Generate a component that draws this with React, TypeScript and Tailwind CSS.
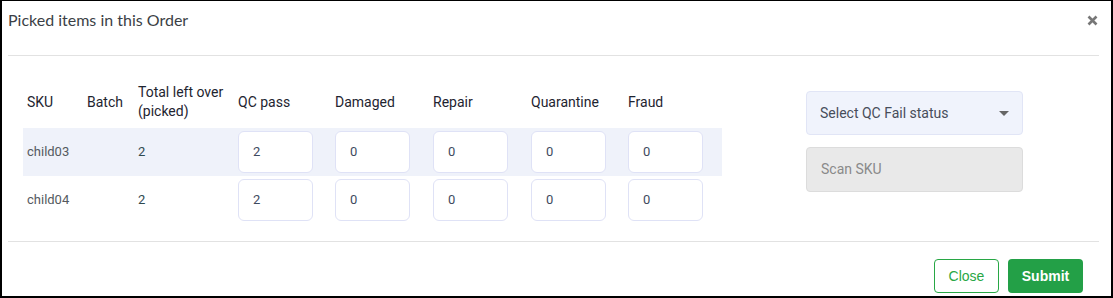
import React from 'react'

const cols = [
  { key: 'sku', label: 'SKU', w: 'w-[60px]' },
  { key: 'batch', label: 'Batch', w: 'w-[51px]' },
  { key: 'left', label: 'Total left over (picked)', w: 'w-[100px]' },
  { key: 'qc', label: 'QC pass', w: 'w-[97px]' },
  { key: 'damaged', label: 'Damaged', w: 'w-[98px]' },
  { key: 'repair', label: 'Repair', w: 'w-[98px]' },
  { key: 'quarantine', label: 'Quarantine', w: 'w-[97px]' },
  { key: 'fraud', label: 'Fraud', w: 'w-[94px]' },
]

const rows = [
  { sku: 'child03', left: 2, values: [2, 0, 0, 0, 0] },
  { sku: 'child04', left: 2, values: [2, 0, 0, 0, 0] },
]

function QtyInput({ value }: { value: number }) {
  return (
    <div className="w-[75px] h-[42px] bg-white border border-[#dfe2f6] rounded-[6px] flex items-center pl-[14px] text-[13px] text-[#3e4a5e]">
      {value}
    </div>
  )
}

export default function App() {
  return (
    <div className="w-[1113px] h-[298px] box-border border-black border-l-2 border-t border-r-2 border-b-2 bg-white flex flex-col font-['Roboto',sans-serif]">
      {/* header */}
      <div className="h-[55px] ml-[6px] mr-[12px] border-b border-[#e2e2e2] flex items-start justify-between">
        <h2 className="pt-[9px] text-[16px] leading-[20px] font-normal text-[#3b3f46] font-['Lato',sans-serif]">
          Picked items in this Order
        </h2>
        <button className="mt-[14px] mr-[1px] p-0">
          <svg width="11" height="11" viewBox="0 0 11 11">
            <path d="M1.5 1.5 L9.5 9.5 M9.5 1.5 L1.5 9.5" stroke="#777" strokeWidth="2.6" strokeLinecap="butt" />
          </svg>
        </button>
      </div>

      {/* body */}
      <div className="flex h-[185px] ml-[21px] mr-[12px]">
        <div className="pt-[24px] w-[699px]">
          <div className="flex h-[48px] items-center pl-[4px] pb-[4px]">
            {cols.map((c) => (
              <div key={c.key} className={`${c.w} text-[14px] leading-[19px] font-normal text-[#1e2430]`}>
                {c.key === 'left' ? (
                  <>
                    Total left over
                    <br />
                    (picked)
                  </>
                ) : (
                  c.label
                )}
              </div>
            ))}
          </div>
          {rows.map((r, i) => (
            <div key={r.sku} className={`flex h-[48px] items-center pl-[4px] ${i === 0 ? 'bg-[#eff2fa]' : ''}`}>
              <div className="w-[60px] text-[13px] text-[#555a60]">{r.sku}</div>
              <div className="w-[51px]" />
              <div className="w-[100px] text-[13px] text-[#2f4a4f]">{r.left}</div>
              {r.values.map((v, j) => (
                <div key={j} className={cols[j + 3].w}>
                  <QtyInput value={v} />
                </div>
              ))}
            </div>
          ))}
        </div>

        <div className="ml-[84px] pt-[35px] w-[217px] flex flex-col gap-[12px]">
          <div className="h-[44px] bg-[#f0f3fc] border border-[#e1e5f6] rounded-[4px] flex items-center justify-between pl-[13px] pr-[13px]">
            <span className="text-[14px] text-[#474d5a]">Select QC Fail status</span>
            <svg width="10" height="5" viewBox="0 0 10 5">
              <path d="M0 0 H10 L5 5 Z" fill="#666" />
            </svg>
          </div>
          <div className="h-[45px] bg-[#e9e9e9] border border-[#dcdcdc] rounded-[4px] flex items-center pl-[14px]">
            <span className="text-[14px] text-[#8a8a8a]">Scan SKU</span>
          </div>
        </div>
      </div>

      {/* footer */}
      <div className="ml-[6px] mr-[12px] border-t border-[#e2e2e2] flex justify-end pt-[17px] pr-[16px] gap-[9px] font-['Liberation_Sans',sans-serif]">
        <button className="w-[65px] h-[34px] border border-[#28a745] rounded-[4px] text-[#28a745] text-[14px] bg-white">
          Close
        </button>
        <button className="w-[75px] h-[34px] rounded-[4px] bg-[#23a047] text-white text-[14px] font-bold">
          Submit
        </button>
      </div>
    </div>
  )
}
